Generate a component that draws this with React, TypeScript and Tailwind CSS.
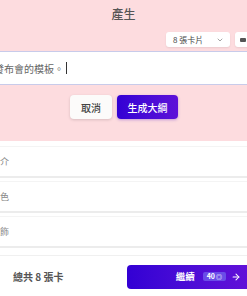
import { ChevronDown, ArrowRight } from 'lucide-react'

const font = { fontFamily: '"Noto Sans CJK TC", "Noto Sans", sans-serif' }

export default function App() {
  const rows = ['簡介', '特色', '服飾']

  return (
    <div className="h-[296px] w-[247px] overflow-hidden bg-white" style={font}>
      <section className="flex h-[141px] flex-col bg-[#fddcdf]">
        <h1 className="pt-[5px] text-center text-[12px] font-medium leading-[18px] text-[#555]">產生</h1>

        <div className="mt-[9px] flex justify-end gap-[5px]">
          <div className="flex h-[15px] w-[64px] items-center justify-between rounded-[3px] bg-white pl-[7px] pr-[6px] shadow-[0_1px_2px_rgba(0,0,0,0.08)]">
            <span className="text-[8px] leading-none text-[#444]">8 張卡片</span>
            <ChevronDown className="h-[8px] w-[8px] text-[#777]" strokeWidth={2} />
          </div>
          <div className="-mr-[10px] flex h-[15px] w-[22px] items-center rounded-l-[3px] bg-white pl-[5px] shadow-[0_1px_2px_rgba(0,0,0,0.08)]">
            <span className="h-[4px] w-[6px] rounded-[1px] bg-[#555]" />
          </div>
        </div>

        <div className="mt-[4px] flex h-[34px] items-center overflow-hidden border-y border-[#c8cbea] bg-white">
          <span className="-ml-[16px] whitespace-nowrap text-[10px] text-[#666]">為發布會的模板。</span>
          <span className="ml-[2px] h-[12px] w-px bg-[#333]" />
        </div>

        <div className="mt-[10px] flex justify-center gap-[5px] pl-[1px]">
          <button className="h-[24px] w-[42px] rounded-[4px] bg-[#fcfbfa] text-[10px] font-medium text-[#444] shadow-[0_1px_3px_rgba(0,0,0,0.15)]">
            取消
          </button>
          <button className="h-[24px] w-[61px] rounded-[4px] bg-gradient-to-r from-[#3300d4] to-[#5d10d8] text-[10px] font-medium text-white shadow-[0_1px_3px_rgba(60,0,200,0.3)]">
            生成大綱
          </button>
        </div>
      </section>

      <div className="flex flex-col pt-[6px]">
        {rows.map((r) => (
          <div key={r} className="mb-[4px] flex h-[31px] items-center border-b-2 border-[#ececec] bg-white shadow-[0_-1px_0_#f4f4f4]">
            <span className="-ml-[9px] text-[9px] text-[#888]">{r}</span>
          </div>
        ))}
        <div className="h-[4px] border-b border-[#f0f0f0]" />
      </div>

      <div className="flex h-[39px] items-center justify-between pl-[13px] pt-[2px]">
        <span className="text-[10px] font-semibold text-[#555]">總共 8 張卡</span>
        <button className="-mr-[4px] flex h-[24px] w-[124px] items-center justify-end rounded-[4px] bg-gradient-to-r from-[#3300d4] to-[#6210d8] pr-[10px] text-white">
          <span className="text-[9.5px] font-bold">繼續</span>
          <span className="ml-[8px] flex items-center gap-[1px] rounded-[2px] bg-[#6a4ce8] px-[4px] text-[7px] font-semibold leading-[9px]">
            40 <span className="text-[6px]">◎</span>
          </span>
          <ArrowRight className="ml-[5px] h-[10px] w-[10px]" strokeWidth={2.5} />
        </button>
      </div>
    </div>
  )
}
